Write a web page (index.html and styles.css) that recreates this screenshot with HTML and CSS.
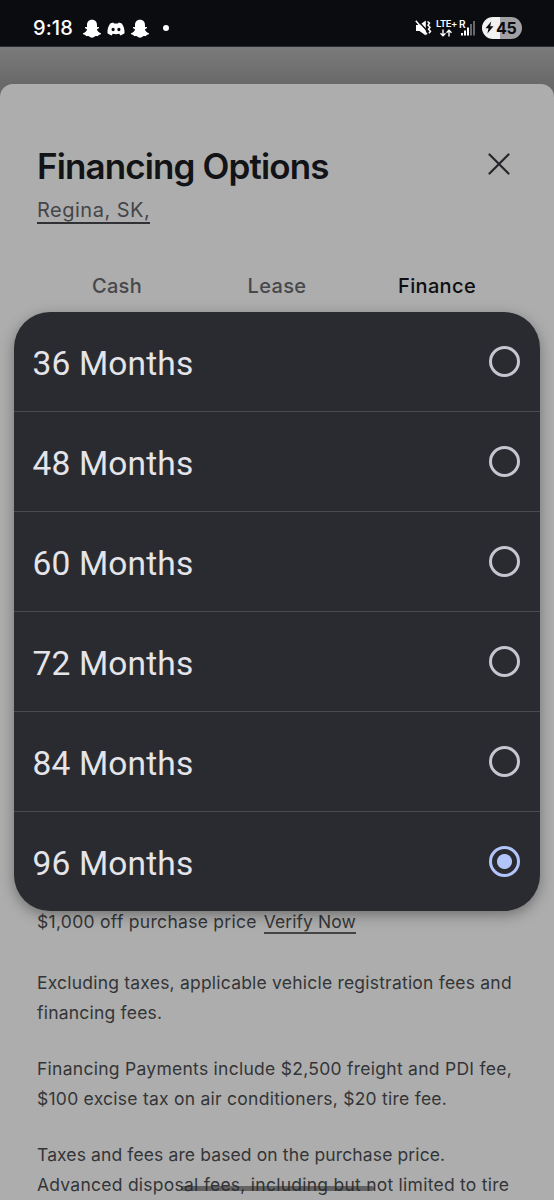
FILE: index.html
```html
<!DOCTYPE html>
<html lang="en">
<head>
<meta charset="utf-8">
<title>Financing Options</title>
<link rel="stylesheet" href="styles.css">
</head>
<body>
<div class="screen">
  <header class="status">
    <div class="status-left">
      <span class="clock">9:18</span>
      <svg class="ghost" viewBox="0 0 20 20"><use href="#snap"/></svg>
      <svg class="discord" viewBox="0 0 18 14"><path fill-rule="evenodd" d="M3.200 1.400 6.300.4 7 1.500h4L11.700.4l3.100 1C16.800 4.200 17.800 7.600 17.500 11.300c-1.400 1.100-2.600 1.700-4.200 2.200l-1-1.700c-2.200.6-4.400.6-6.600 0l-1 1.700C3.100 13 1.900 12.400.5 11.300.2 7.600 1.200 4.200 3.200 1.400ZM6.100 5.700a1.600 1.800 0 1 0 0 3.600 1.600 1.800 0 0 0 0-3.600Zm5.800 0a1.600 1.800 0 1 0 0 3.600 1.600 1.800 0 0 0 0-3.600Z"/></svg>
      <svg class="ghost" viewBox="0 0 20 20"><path id="snap" d="M10 .8c3.200 0 5 2.200 5 5.100v2.200c.6.300 1.500-.5 2 .1.500.7-.6 1.300-1.700 1.900-.7.400.2 2.500 1.900 3.500.8.500 1.900.6 1.900 1.100 0 .9-1.700 1-2.500 1.300-.3.400-.2 1-.7 1.100-.8.200-1.800-.2-2.800.2-1 .5-1.700 1.500-3.100 1.500s-2.100-1-3.100-1.500c-1-.4-2 0-2.800-.2-.5-.1-.4-.7-.7-1.100-.8-.3-2.500-.4-2.500-1.300 0-.5 1.100-.6 1.900-1.100 1.700-1 2.600-3.100 1.900-3.500C3.600 9.500 2.500 8.900 3 8.200c.5-.6 1.400.2 2-.1V5.900C5 3 6.800.8 10 .8Z"/></svg>
      <span class="more-dot"></span>
    </div>
    <div class="status-right">
      <svg class="mute" viewBox="0 0 18 18"><path d="M1 6h3.500L10.800 1.500v15L4.500 12H1Z"/><path class="slash" d="M1.800 0.500 14 13.800"/><path class="line" d="M.8 1.700 12 15.200M12.500 2.500l2 1.700-1.500 2 2 2-1.500 2 2 2-1.500 2"/></svg>
      <div class="network"><span>LTE+</span>
        <svg class="arrows" viewBox="0 0 14 8"><path d="M4 .5v6M1.500 4.300 4 6.800l2.500-2.500M10 7.500v-6M7.500 3.700 10 1.200l2.500 2.500"/></svg>
      </div>
      <div class="cell">
        <span>R</span>
        <svg class="signal" viewBox="0 0 17 17"><path d="M2 14h2v2.500H2ZM5 11.500h2v5H5ZM8 8.500h2v8H8Z"/><path class="off" d="M11 5h2v11.500h-2ZM14 2h2v14.500h-2Z"/></svg>
      </div>
      <div class="battery">
        <svg class="bolt" viewBox="0 0 9 13"><path d="M6.200.5.5 7.200h3L2.400 12.500 8.500 5.300H5.200Z"/></svg>
        <span>45</span>
      </div>
    </div>
  </header>

  <main class="sheet">
    <div class="heading">
      <div>
        <h1>Financing Options</h1>
        <a class="region">Regina, SK,</a>
      </div>
      <svg class="close" viewBox="0 0 22 22"><path d="M1.500 1.500l19 19M20.500 1.500l-19 19"/></svg>
    </div>
    <nav class="tabs">
      <span>Cash</span><span>Lease</span><span class="active">Finance</span>
    </nav>
    <section class="notes">
      <p><span class="offer">$1,000 off purchase price</span><a class="verify">Verify Now</a></p>
      <p>Excluding taxes, applicable vehicle registration fees and<br>financing fees.</p>
      <p><span class="freight">Financing Payments include $2,500 freight and PDI fee,</span><br><span class="excise">$100 excise tax on air conditioners, $20 tire fee.</span></p>
      <p><span class="basis">Taxes and fees are based on the purchase price.</span><br><span class="excise">Advanced disposal fees, including but not limited to tire</span></p>
    </section>
  </main>

  <ul class="menu">
    <li><span>36 Months</span><i class="radio"></i></li>
    <li><span>48 Months</span><i class="radio"></i></li>
    <li><span>60 Months</span><i class="radio"></i></li>
    <li><span>72 Months</span><i class="radio"></i></li>
    <li><span>84 Months</span><i class="radio"></i></li>
    <li><span>96 Months</span><i class="radio checked"></i></li>
  </ul>
  <div class="home-bar"></div>
</div>
</body>
</html>
```
FILE: styles.css
```css
* { box-sizing: border-box; }
body { margin: 0; font-family: Inter, "Liberation Sans", sans-serif; }
.screen {
  position: relative;
  width: 554px;
  height: 1200px;
  overflow: hidden;
  display: flex;
  flex-direction: column;
  background: linear-gradient(#7b7b7b 46px, #696969 84px);
}
.status {
  height: 47px;
  flex: none;
  padding: 10px 32px 0 33px;
  display: flex;
  justify-content: space-between;
  background: #0b0c10;
  border-bottom: 1px solid #2c2d30;
  color: #fff;
}
.status svg { fill: #fff; flex: none; }
.status-left, .status-right { display: flex; align-items: center; height: 36px; }
.clock { width: 49px; font-size: 20px; font-weight: 500; letter-spacing: 0.100px; }
.ghost { width: 20px; height: 20px; margin-top: 2px; }
.discord { width: 18px; height: 14px; margin: 1px 5px 0; }
.more-dot { width: 6px; height: 6px; margin-left: 13px; border-radius: 50%; background: #fff; }
.mute { width: 18px; height: 18px; }
.mute .slash { stroke: #0b0c10; stroke-width: 1.400; }
.mute .line { fill: none; stroke: #fff; stroke-width: 1.500; }
.network { width: 22px; margin-left: 2px; display: flex; flex-direction: column; align-items: center; font-size: 9.500px; line-height: 10px; font-weight: 600; letter-spacing: -0.500px; }
.network span { margin-right: -1px; }
.arrows { width: 14px; height: 8px; }
.status .arrows { fill: none; stroke: #fff; stroke-width: 1.400; }
.cell { display: grid; width: 17px; height: 18px; margin-left: 2px; font-size: 10px; line-height: 11px; font-weight: 600; }
.cell > * { grid-area: 1 / 1; }
.signal { width: 17px; height: 17px; }
.signal .off { fill: #66676a; }
.battery {
  width: 40px; height: 22px; margin-left: 6px; padding-left: 3px;
  display: flex; align-items: center; gap: 2px;
  border-radius: 11px;
  background: linear-gradient(90deg, #f2f2f2 18px, #a1a1a4 18px);
  color: #0b0c10; font-size: 16px; font-weight: 700; letter-spacing: -0.300px;
}
.status .bolt { width: 9px; height: 13px; margin-top: -1px; fill: #0b0c10; }
.sheet {
  flex: none;
  height: 1117px;
  margin-top: 36.500px;
  padding: 59.500px 37px 0;
  border-radius: 13px 13px 0 0;
  background: #adadad;
  color: #343537;
}
.heading { display: flex; justify-content: space-between; }
h1 { margin: 0; font-size: 35px; line-height: 46px; font-weight: 600; letter-spacing: -0.880px; color: #111317; }
.region { display: inline-block; height: 35px; padding-top: 9px; font-size: 20px; line-height: 24px; letter-spacing: 0.500px; border-bottom: 2px solid #303134; color: #444548; }
.close { width: 22px; height: 22px; margin: 10px 7px 0 0; stroke: #24262a; stroke-width: 2.200; stroke-linecap: round; }
.tabs { display: grid; grid-template-columns: repeat(3, 1fr); margin-top: 47px; text-align: center; font-size: 20px; line-height: 30px; font-weight: 500; letter-spacing: 0.350px; color: #47484b; }
.tabs .active { color: #0d0e11; }
.notes { margin-top: 606.300px; font-size: 17.500px; line-height: 30.700px; letter-spacing: 0.210px; white-space: nowrap; }
.notes p { margin: 0 0 24.600px; }
.notes p:first-child { margin-bottom: 29.500px; }
.offer { letter-spacing: 0.290px; }
.freight { letter-spacing: 0.270px; }
.excise { letter-spacing: 0.250px; }
.basis { letter-spacing: 0.120px; }
.verify { display: inline-block; height: 27px; margin-left: 7px; letter-spacing: 0.050px; border-bottom: 2px solid #444; }
.menu {
  position: absolute; left: 14px; top: 312px;
  width: 526px; height: 598.500px;
  margin: 0; padding: 0; list-style: none;
  border-radius: 36px;
  background: #2a2b30;
  box-shadow: 0 4px 14px rgba(0, 0, 0, 0.35);
  font-family: Roboto, sans-serif; font-size: 33.500px; letter-spacing: 0.150px; color: #e4e4e9;
}
.menu li { height: 100px; padding: 4px 20px 0 18.500px; display: flex; align-items: center; justify-content: space-between; border-bottom: 1px solid #4a4b50; }
.menu li:last-child { height: 99px; border: 0; }
.radio { width: 31px; height: 31px; margin-top: -5px; border: 3px solid #c5c6d0; border-radius: 50%; }
.radio.checked { border-color: #b2c5fb; background: radial-gradient(circle, #b2c5fb 7px, transparent 8px); }
.home-bar { position: absolute; left: 181px; top: 1186px; width: 193px; height: 5px; border-radius: 3px; background: rgba(40, 40, 42, 0.55); }
```
